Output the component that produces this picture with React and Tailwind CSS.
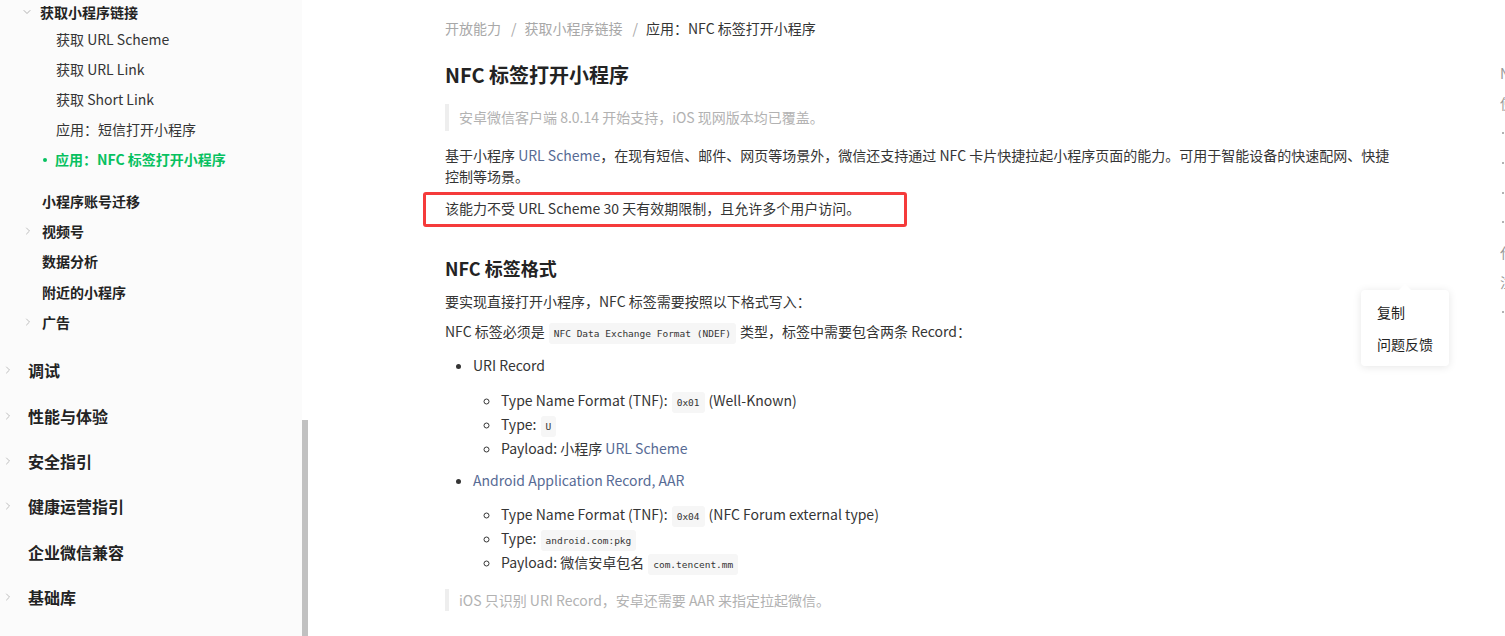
import React from 'react'
import { ChevronDown, ChevronRight } from 'lucide-react'

const FONT = { fontFamily: '"Segoe UI", "Noto Sans CJK SC", sans-serif' }

const subLinks = ['获取 URL Scheme', '获取 URL Link', '获取 Short Link', '应用：短信打开小程序']
const groupItems = [
  { label: '小程序账号迁移' },
  { label: '视频号', arrow: true },
  { label: '数据分析' },
  { label: '附近的小程序' },
  { label: '广告', arrow: true },
]
const topItems = [
  { label: '调试', arrow: true },
  { label: '性能与体验', arrow: true },
  { label: '安全指引', arrow: true },
  { label: '健康运营指引', arrow: true },
  { label: '企业微信兼容' },
  { label: '基础库', arrow: true },
  { label: '小程序测试' },
]
const toc = [
  { t: 'NFC 标签打开小程序' },
  { t: '使用方式' },
  { t: 'URI Record', sub: true },
  { t: 'AAR', sub: true },
  { t: '写入', sub: true },
  { t: '读取', sub: true },
  { t: '代码示例' },
  { t: '注意事项' },
  { t: '其他', sub: true },
]

function Code({ children }) {
  return (
    <code className="mx-1 rounded-[3px] bg-[#f6f6f6] px-[5px] py-[5px] font-['DejaVu_Sans_Mono',monospace] text-[9.5px] leading-none text-[#353535]">
      {children}
    </code>
  )
}

function Sidebar() {
  return (
    <aside className="h-[636px] w-[302px] shrink-0 overflow-hidden bg-[#fbfbfb]">
      <div className="flex h-[24px] items-center text-[14px] font-bold text-[#232323]">
        <ChevronDown className="ml-[21px] mr-[7px] h-[12px] w-[12px] text-[#999]" strokeWidth={1.5} />
        获取小程序链接
      </div>
      {subLinks.map((s) => (
        <div key={s} className="flex h-[30px] items-center pl-[56px] text-[14px] text-[#353535]">{s}</div>
      ))}
      <div className="flex h-[31px] items-center pl-[43px] text-[14px] font-bold text-[#07c160]">
        <span className="mr-[8px] h-[4px] w-[4px] rounded-full bg-[#07c160]" />
        应用：NFC 标签打开小程序
      </div>
      <div className="h-[11px]" />
      {groupItems.map((g) => (
        <div key={g.label} className="flex h-[30.3px] items-center text-[14px] font-bold text-[#232323]">
          <span className="flex w-[42px] justify-end pr-[8px]">
            {g.arrow && <ChevronRight className="h-[12px] w-[12px] text-[#aaa]" strokeWidth={1.5} />}
          </span>
          {g.label}
        </div>
      ))}
      <div className="h-[10px]" />
      {topItems.map((t) => (
        <div key={t.label} className="flex h-[45.4px] items-center text-[16px] font-bold text-[#232323]">
          <span className="flex w-[28px] justify-start pl-[2px]">
            {t.arrow && <ChevronRight className="h-[12px] w-[12px] text-[#aaa]" strokeWidth={1.5} />}
          </span>
          {t.label}
        </div>
      ))}
    </aside>
  )
}

function Scrollbar() {
  return (
    <div className="flex h-[636px] w-[6px] shrink-0 flex-col bg-white">
      <div className="h-[420px]" />
      <div className="flex-1 bg-[#c1c1c1]" />
    </div>
  )
}

function Article() {
  return (
    <main className="min-w-0 flex-1 pl-[137px] pt-[18px] text-[14px] text-[#353535]">
      <div className="flex h-[20px] items-center text-[#a8a8a8]">
        开放能力<span className="ml-[10px] mr-[8px]">/</span>获取小程序链接<span className="ml-[10px] mr-[8px]">/</span>
        <span className="text-[#353535]">应用：NFC 标签打开小程序</span>
      </div>

      <h1 className="mt-[23px] text-[20px] font-bold leading-[28px] text-[#232323]">NFC 标签打开小程序</h1>

      <blockquote className="mt-[15px] border-l-4 border-[#eeeeee] pl-[10px] leading-[27px] text-[#b2b2b2]">
        安卓微信客户端 8.0.14 开始支持，iOS 现网版本均已覆盖。
      </blockquote>

      <p className="mt-[14px] leading-[21px]">
        基于小程序 <span className="text-[#576b95]">URL Scheme</span>，在现有短信、邮件、网页等场景外，微信还支持通过 NFC 卡片快捷拉起小程序页面的能力。可用于智能设备的快速配网、快捷
        <br />
        控制等场景。
      </p>

      <p className="relative mt-[11px] leading-[21px]">
        该能力不受 URL Scheme 30 天有效期限制，且允许多个用户访问。
        <span className="absolute -left-[22px] -top-[6px] h-[35px] w-[484px] rounded-[3px] border-[3px] border-[#f53b3b]" />
      </p>

      <h2 className="mt-[36px] text-[18px] font-bold leading-[26px] text-[#232323]">NFC 标签格式</h2>

      <p className="mt-[10px] leading-[21px]">要实现直接打开小程序，NFC 标签需要按照以下格式写入：</p>
      <p className="mt-[9px] leading-[21px]">
        NFC 标签必须是<Code>NFC Data Exchange Format (NDEF)</Code>类型，标签中需要包含两条 Record：
      </p>

      <ul className="mt-[13px] list-disc pl-[28px] leading-[21px] marker:text-[#353535]">
        <li>URI Record</li>
        <ul className="mt-[12px] list-[circle] pl-[28px] leading-[24px]">
          <li>Type Name Format (TNF):<Code>0x01</Code>(Well-Known)</li>
          <li>Type:<Code>U</Code></li>
          <li>Payload: 小程序 <span className="text-[#576b95]">URL Scheme</span></li>
        </ul>
        <li className="mt-[10px] text-[#576b95] marker:text-[#353535]">Android Application Record, AAR</li>
        <ul className="mt-[11px] list-[circle] pl-[28px] leading-[24px]">
          <li>Type Name Format (TNF):<Code>0x04</Code>(NFC Forum external type)</li>
          <li>Type:<Code>android.com:pkg</Code></li>
          <li>Payload: 微信安卓包名<Code>com.tencent.mm</Code></li>
        </ul>
      </ul>

      <blockquote className="mt-[15px] border-l-4 border-[#eeeeee] pl-[10px] leading-[22px] text-[#b2b2b2]">
        iOS 只识别 URI Record，安卓还需要 AAR 来指定拉起微信。
      </blockquote>
    </main>
  )
}

function Toc() {
  return (
    <nav className="w-[5px] shrink-0 overflow-hidden pt-[62px] text-[14px] text-[#999]">
      {toc.map((i) => (
        <div key={i.t} className="flex h-[29.9px] items-start whitespace-nowrap leading-[22px]">
          {i.sub ? (
            <>
              <span className="ml-[2px] mr-[6px] mt-[10px] h-[2px] w-[2px] shrink-0 rounded-full bg-[#999]" />
              {i.t}
            </>
          ) : (
            i.t
          )}
        </div>
      ))}
    </nav>
  )
}

export default function App() {
  return (
    <div className="relative flex h-[636px] w-[1505px] overflow-hidden bg-white" style={FONT}>
      <Sidebar />
      <Scrollbar />
      <Article />
      <Toc />

      {/* context menu */}
      <div className="absolute left-[1361px] top-[290px] w-[88px] rounded-[4px] bg-white py-[8px] text-[14px] text-[#232323] shadow-[0_1px_8px_rgba(0,0,0,0.1)]">
        <span className="absolute -top-[6px] left-[38px] h-0 w-0 border-x-[6px] border-b-[6px] border-x-transparent border-b-white" />
        <div className="flex h-[28px] items-center pl-[16px]">复制</div>
        <div className="mt-[4px] flex h-[28px] items-center pl-[16px]">问题反馈</div>
      </div>
    </div>
  )
}
